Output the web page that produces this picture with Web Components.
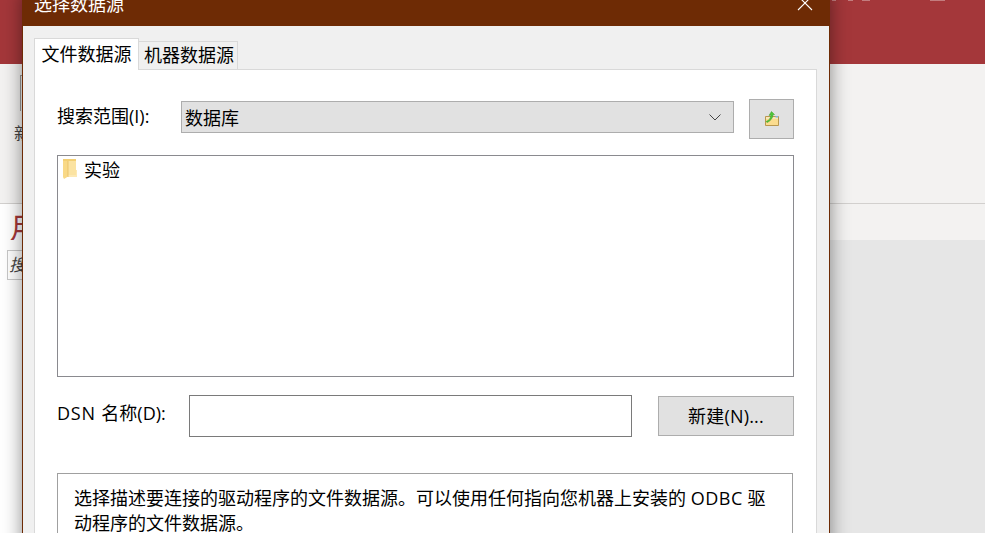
<!DOCTYPE html>
<html>
<head>
<meta charset="utf-8">
<title>选择数据源</title>
<style>
  html, body { margin: 0; height: 100%; overflow: hidden; }
  body { position: relative; width: 985px; height: 533px; font-family: "Open Sans", "Noto Sans CJK SC", sans-serif; }
  .wide { letter-spacing: .5px; }
</style>
</head>
<body>
<app-backdrop></app-backdrop>
<dsn-dialog heading="选择数据源">
  <dsn-tabs></dsn-tabs>
  <dsn-panel>
    <look-row label="搜索范围(I):" value="数据库"></look-row>
    <file-list><file-item>实验</file-item></file-list>
    <name-row lead="DSN " label="名称(D):" action="新建(N)..."></name-row>
    <desc-box>选择描述要连接的驱动程序的文件数据源。可以使用任何指向您机器上安装的 <span class="wide">ODBC</span> 驱动程序的文件数据源。</desc-box>
  </dsn-panel>
</dsn-dialog>

<script>
const CJK = `"Open Sans", "Noto Sans CJK SC", sans-serif`;

// the access window behind the dialog, only its edges show
class AppBackdrop extends HTMLElement {
  constructor() {
    super();
    this.attachShadow({mode: 'open'}).innerHTML = `
      <style>
        :host { display: flex; flex-direction: column; width: 985px; height: 533px; background: #e6e6e6; font-family: ${CJK}; }
        .ribbon-top { height: 64px; background: #a4373a; flex: none; display: flex; padding-left: 832px; box-sizing: border-box; }
        .ribbon-top i { display: block; height: 1px; background: rgba(255,255,255,.35); }
        .ribbon { background: #f3f2f1; border-bottom: 1px solid #d2d0ce; flex: none; height: 128px; padding-top: 11px; display: flex; flex-direction: column; }
        .strip { height: 36px; background: #f3f2f1; flex: none; display: flex; }
        .rest { flex: 1; display: flex; }
        .white { width: 830px; background: #fff; padding-left: 7px; box-sizing: border-box; }
        .edge { width: 21px; height: 36px; border-left: 1px solid #9a9a9a; border-top: 1px solid #9a9a9a; margin-left: 20px; box-sizing: border-box; flex: none; }
        .new { margin: 11px 0 0 14px; font-size: 17px; line-height: 24px; color: #444; }
        .month { display: block; padding-top: 6px; color: #a4373a; font-size: 30px; line-height: 36px; margin-left: 2px; height: 36px; box-sizing: border-box; }
        .search { display: block; width: 40px; height: 30px; border: 1px solid #c8c8c8; box-sizing: border-box; font-size: 17px; line-height: 28px; font-style: italic; color: #444; padding-left: 1px; margin-top: 10px; }
      </style>
      <div class="ribbon-top"><i style="width:4px;margin-right:12px"></i><i style="width:5px;margin-right:9px"></i><i style="width:8px;margin-right:60px"></i><i style="width:15px"></i></div>
      <div class="ribbon"><div class="edge"></div><div class="new">新建</div></div>
      <div class="strip"><div class="white"><span class="month">月</span></div></div>
      <div class="rest"><div class="white"><span class="search">搜索</span></div></div>`;
  }
}
customElements.define('app-backdrop', AppBackdrop);

class DsnDialog extends HTMLElement {
  constructor() {
    super();
    this.attachShadow({mode: 'open'}).innerHTML = `
      <style>
        :host { position: absolute; left: 22px; top: -8px; width: 808px; height: 620px; box-sizing: border-box; display: flex; flex-direction: column;
                background: #f0f0f0; border: 1px solid #6e2b05; border-top: 0; box-shadow: 0 0 18px rgba(0,0,0,.45); }
        .title { flex: none; height: 34px; background: #6e2b05; color: #fff; display: flex; align-items: center; justify-content: space-between; font-size: 18px; padding: 0 16px 0 11px; }
        .title span { position: relative; top: -6px; }
        .title svg { position: relative; top: -6px; }
        .body { padding: 12px 12px 0 11px; flex: 1; display: flex; flex-direction: column; }
      </style>
      <div class="title"><span></span><svg width="16" height="16" viewBox="0 0 16 16"><path d="M1 1L15 15M15 1L1 15" stroke="#fff" stroke-width="1.1" fill="none"/></svg></div>
      <div class="body"><slot></slot></div>`;
    this.shadowRoot.querySelector('span').textContent = this.getAttribute('heading');
  }
}
customElements.define('dsn-dialog', DsnDialog);

class DsnTabs extends HTMLElement {
  constructor() {
    super();
    this.attachShadow({mode: 'open'}).innerHTML = `
      <style>
        :host { display: flex; align-items: flex-end; height: 32px; flex: none; font-size: 18px; color: #000; position: relative; z-index: 1; margin-bottom: -1px; }
        div { box-sizing: border-box; }
        .on { width: 105px; height: 32px; background: #fff; border: 1px solid #d9d9d9; border-bottom: 0; line-height: 30px; text-align: center; }
        .off { width: 99px; height: 29px; background: #f0f0f0; border: 1px solid #d9d9d9; border-left: 0; line-height: 26px; padding-left: 2px; text-align: center; }
      </style>
      <div class="on">文件数据源</div><div class="off">机器数据源</div>`;
  }
}
customElements.define('dsn-tabs', DsnTabs);

class DsnPanel extends HTMLElement {
  constructor() {
    super();
    this.attachShadow({mode: 'open'}).innerHTML = `
      <style>
        :host { display: flex; flex-direction: column; flex: 1; background: #fff; border: 1px solid #d9d9d9; padding: 29px 21px 0 22px; }
      </style>
      <slot></slot>`;
  }
}
customElements.define('dsn-panel', DsnPanel);

class LookRow extends HTMLElement {
  constructor() {
    super();
    this.attachShadow({mode: 'open'}).innerHTML = `
      <style>
        :host { display: flex; align-items: flex-start; height: 40px; font-size: 18px; color: #000; flex: none; }
        .label { width: 124px; line-height: 34px; flex: none; }
        .combo { width: 553px; height: 32px; margin-top: 2px; box-sizing: border-box; background: #e1e1e1; border: 1px solid #adadad; display: flex; align-items: center; justify-content: space-between; padding: 0 12px 0 3px; flex: none; }
        .up { width: 45px; height: 40px; margin-left: 15px; box-sizing: border-box; background: #e1e1e1; border: 1px solid #adadad; display: flex; align-items: center; justify-content: center; flex: none; }
      </style>
      <div class="label"></div>
      <div class="combo"><span></span><svg width="12" height="7" viewBox="0 0 12 7"><path d="M.5.5L6 6 11.5.5" stroke="#444" fill="none"/></svg></div>
      <div class="up"><svg width="16" height="16" viewBox="0 0 16 16">
        <path d="M1.5 5.5H14.5V14.500H1.500Z" fill="#fbdc8f" stroke="#b8974f"/>
        <path d="M2 6H14V8H2Z" fill="#f7e7b9"/>
        <path d="M2 10.500C5 9.500 6.500 7.500 7 4L5 4.500 7.500 .5 10.500 3.500 9 3.800C8.800 7.500 6 10.500 3 11.500Z" fill="#4fc737" stroke="#3a9a2a" stroke-width=".5"/>
        <path d="M11.500 5H14V6.500H11.500Z" fill="#7fb4e0"/>
      </svg></div>`;
    const s = this.shadowRoot;
    s.querySelector('.label').textContent = this.getAttribute('label');
    s.querySelector('.combo span').textContent = this.getAttribute('value');
  }
}
customElements.define('look-row', LookRow);

class FileList extends HTMLElement {
  constructor() {
    super();
    this.attachShadow({mode: 'open'}).innerHTML = `
      <style>
        :host { display: block; width: 737px; height: 222px; margin-top: 16px; box-sizing: border-box; border: 1px solid #8a8a8f; background: #fff; padding: 1px 5px; flex: none; }
      </style>
      <slot></slot>`;
  }
}
customElements.define('file-list', FileList);

class FileItem extends HTMLElement {
  constructor() {
    super();
    this.attachShadow({mode: 'open'}).innerHTML = `
      <style>
        :host { display: flex; align-items: center; gap: 7px; height: 24px; font-size: 18px; color: #000; }
      </style>
      <svg width="14" height="20" viewBox="0 0 14 20">
        <path d="M0 0H13V16H0Z" fill="#f3cf73"/>
        <path d="M5 2H13V16H5Z" fill="#fbe3a2"/>
        <path d="M13 11H14V18H5V16H13Z" fill="#fde9b4"/>
        <path d="M0 2L5 2V17.500L1 20 0 18Z" fill="#f9d987"/>
        <path d="M5 2V18" stroke="#e3b85c" stroke-width=".7"/>
      </svg>
      <slot></slot>`;
  }
}
customElements.define('file-item', FileItem);

class NameRow extends HTMLElement {
  constructor() {
    super();
    this.attachShadow({mode: 'open'}).innerHTML = `
      <style>
        :host { display: flex; align-items: flex-start; margin-top: 18px; font-size: 18px; color: #000; flex: none; height: 42px; }
        .label { width: 132px; line-height: 36px; flex: none; }
        .lead { letter-spacing: .8px; white-space: pre; }
        .field { width: 443px; height: 42px; box-sizing: border-box; border: 1px solid #7a7a7a; background: #fff; flex: none; }
        .btn { width: 136px; height: 40px; margin: 1px 0 0 26px; box-sizing: border-box; background: #e1e1e1; border: 1px solid #adadad; text-align: center; line-height: 38px; flex: none; letter-spacing: .2px; }
      </style>
      <div class="label"><span class="lead"></span><span class="rest"></span></div><div class="field"></div><div class="btn"></div>`;
    const s = this.shadowRoot;
    s.querySelector('.lead').textContent = this.getAttribute('lead');
    s.querySelector('.rest').textContent = this.getAttribute('label');
    s.querySelector('.btn').textContent = this.getAttribute('action');
  }
}
customElements.define('name-row', NameRow);

class DescBox extends HTMLElement {
  constructor() {
    super();
    this.attachShadow({mode: 'open'}).innerHTML = `
      <style>
        :host { display: block; width: 736px; margin-top: 36px; box-sizing: border-box; border: 1px solid #a0a0a0; padding: 12px 16px; font-size: 18px; line-height: 25px; color: #000; height: 120px; flex: none; }
      </style>
      <slot></slot>`;
  }
}
customElements.define('desc-box', DescBox);
</script>
</body>
</html>
